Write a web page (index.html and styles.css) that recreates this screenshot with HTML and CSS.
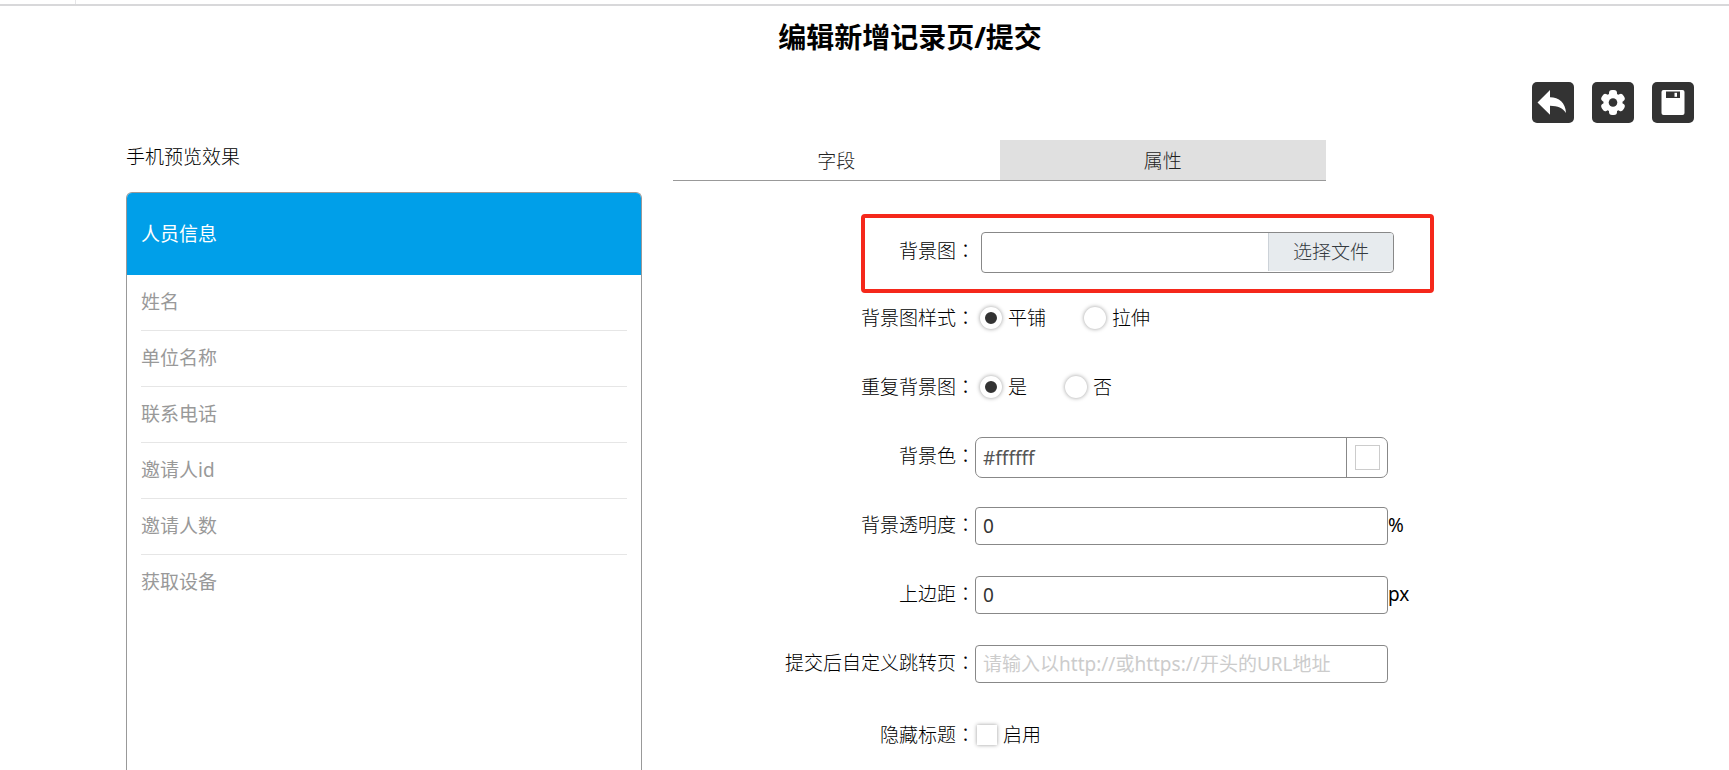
FILE: index.html
```html
<!DOCTYPE html>
<html lang="zh-CN">
<head>
<meta charset="utf-8">
<meta name="viewport" content="width=device-width, initial-scale=1">
<title>编辑新增记录页/提交</title>
<link rel="stylesheet" href="styles.css">
</head>
<body>
<div class="topbar"></div>
<h1 class="title">编辑新增记录页/提交</h1>
<div class="toolbar">
  <button class="tool" type="button" aria-label="返回">
    <svg viewBox="0 0 42 41" width="42" height="41"><path fill="#fff" d="M5.500 20.500 18 8v7.200c9 .3 15.500 5.300 16 15.800-3.300-5.200-8-7.200-16-7.300v9z"/></svg>
  </button>
  <button class="tool" type="button" aria-label="设置">
    <svg viewBox="0 0 42 41" width="42" height="41"><g fill="#fff"><circle cx="21" cy="20.500" r="9.500"/><rect x="17" y="8" width="8" height="25" rx="3"/><rect x="17" y="8" width="8" height="25" rx="3" transform="rotate(60 21 20.500)"/><rect x="17" y="8" width="8" height="25" rx="3" transform="rotate(120 21 20.500)"/></g><circle cx="21" cy="20.500" r="4.300" fill="#333"/></svg>
  </button>
  <button class="tool" type="button" aria-label="保存">
    <svg viewBox="0 0 42 41" width="42" height="41"><rect x="9.500" y="8" width="23" height="25" rx="2" fill="#fff"/><path fill="#333" d="M14 9.500h14V16H14z"/><path fill="#fff" d="M22.500 10.800H25v4h-2.500z"/></svg>
  </button>
</div>
<main class="workspace">
  <section class="preview">
    <h2 class="preview-title">手机预览效果</h2>
    <div class="phone">
      <header class="phone-header">人员信息</header>
      <ul class="fields">
        <li class="field">姓名</li>
        <li class="field">单位名称</li>
        <li class="field">联系电话</li>
        <li class="field">邀请人id</li>
        <li class="field">邀请人数</li>
        <li class="field">获取设备</li>
      </ul>
    </div>
  </section>
  <section class="settings">
    <div class="tabs" role="tablist">
      <button class="tab" type="button" role="tab" aria-selected="false">字段</button>
      <button class="tab tab-active" type="button" role="tab" aria-selected="true">属性</button>
    </div>
    <form class="form">
      <div class="row row-file">
        <label class="label label-input" for="bg-file">背景图<span class="colon" lang="zh-Hant">：</span></label>
        <div class="file">
          <input class="file-name" id="bg-file" type="text" readonly>
          <button class="file-button" type="button">选择文件</button>
        </div>
        <div class="highlight"></div>
      </div>
      <div class="row" role="radiogroup" aria-labelledby="style-label">
        <span class="label" id="style-label">背景图样式<span class="colon" lang="zh-Hant">：</span></span>
        <div class="options">
          <label class="option"><input class="radio" type="radio" name="style" checked>平铺</label>
          <label class="option"><input class="radio" type="radio" name="style">拉伸</label>
        </div>
      </div>
      <div class="row" role="radiogroup" aria-labelledby="repeat-label">
        <span class="label" id="repeat-label">重复背景图<span class="colon" lang="zh-Hant">：</span></span>
        <div class="options">
          <label class="option"><input class="radio" type="radio" name="repeat" checked>是</label>
          <label class="option"><input class="radio" type="radio" name="repeat">否</label>
        </div>
      </div>
      <div class="row row-color">
        <label class="label label-input" for="bg-color">背景色<span class="colon" lang="zh-Hant">：</span></label>
        <div class="color">
          <input class="color-value" id="bg-color" type="text" value="#ffffff">
          <button class="color-button" type="button" aria-label="选择颜色"><span class="swatch"></span></button>
        </div>
      </div>
      <div class="row">
        <label class="label label-input" for="opacity">背景透明度<span class="colon" lang="zh-Hant">：</span></label>
        <input class="input" id="opacity" type="text" value="0">
        <span class="unit">%</span>
      </div>
      <div class="row">
        <label class="label label-input" for="margin-top">上边距<span class="colon" lang="zh-Hant">：</span></label>
        <input class="input" id="margin-top" type="text" value="0">
        <span class="unit">px</span>
      </div>
      <div class="row">
        <label class="label label-input" for="redirect">提交后自定义跳转页<span class="colon" lang="zh-Hant">：</span></label>
        <input class="input" id="redirect" type="text" placeholder="请输入以http://或https://开头的URL地址">
      </div>
      <div class="row row-last">
        <span class="label" id="hide-label">隐藏标题<span class="colon" lang="zh-Hant">：</span></span>
        <label class="check"><input class="checkbox" type="checkbox" aria-describedby="hide-label">启用</label>
      </div>
    </form>
  </section>
</main>
</body>
</html>
```
FILE: styles.css
```css
* {
  box-sizing: border-box;
}

body {
  margin: 0;
  min-height: 100vh;
  display: flex;
  flex-direction: column;
  background: #fff;
  color: #000;
  font: 300 19px/28px "Noto Sans", "Noto Sans CJK SC", sans-serif;
}

button,
input {
  font: inherit;
  margin: 0;
}

button {
  padding: 0;
  border: 0;
  cursor: pointer;
}

.topbar {
  height: 6px;
  padding-left: 75px;
  border-bottom: 2px solid #d8d8da;
}

.topbar::before {
  content: "";
  display: block;
  width: 1px;
  height: 4px;
  background: #e6e6e8;
}

.title {
  margin: 11px 0 0 91px;
  font-size: 28px;
  line-height: 40px;
  font-weight: 700;
  text-align: center;
}

.toolbar {
  display: flex;
  justify-content: flex-end;
  gap: 18px;
  margin-top: 25px;
  padding-right: 35px;
}

.tool {
  display: flex;
  width: 42px;
  height: 41px;
  border-radius: 5px;
  background: #333;
}

.workspace {
  flex: 1;
  display: grid;
  grid-template-columns: 516fr 761fr;
  gap: 31px;
  padding: 17px 17.06% 0 7.29%;
}

.preview {
  display: flex;
  flex-direction: column;
}

.preview-title {
  margin: 3px 0 21px;
  font-size: 19px;
  line-height: 28px;
  font-weight: 300;
}

.phone {
  flex: 1;
  border: 1px solid #999;
  border-bottom: 0;
  border-radius: 6px 6px 0 0;
}

.phone-header {
  padding: 27px 14px;
  border-radius: 5px 5px 0 0;
  background: #009fe9;
  color: #fff;
  font-weight: 400;
}

.fields {
  list-style: none;
  margin: 0;
  padding: 0 14px;
}

.field {
  padding: 13px 0 14px;
  border-bottom: 1px solid #e6e6e6;
  color: #999;
  font-weight: 400;
}

.field:last-child {
  border-bottom: 0;
}

.tabs {
  display: flex;
  width: 85.8%;
  border-bottom: 1px solid #999;
}

.tab {
  flex: 1;
  height: 40px;
  padding-top: 2px;
  background: none;
  color: #222;
}

.tab-active {
  background: #e0e0e0;
}

.form {
  padding-top: 51px;
}

.row {
  position: relative;
  display: grid;
  grid-template-columns: 302px minmax(0, 413px) auto;
  align-items: center;
  min-height: 38px;
  margin-bottom: 31px;
}

.row-file {
  margin-bottom: 26px;
}

.row-color {
  margin-bottom: 29px;
}

.row-last {
  min-height: 42px;
  margin-bottom: 0;
}

.label {
  text-align: right;
  white-space: nowrap;
}

.label-input,
.unit {
  padding-bottom: 3px;
}

.unit {
  font-weight: 400;
}

.colon {
  font-family: "Noto Sans CJK TC", sans-serif;
  line-height: 0;
}

.highlight {
  position: absolute;
  top: -18px;
  bottom: -20px;
  left: 188px;
  width: 573px;
  border: 4px solid #f5281b;
  border-radius: 4px;
  pointer-events: none;
}

.file {
  display: flex;
  height: 41px;
  margin: 0 -6px 0 6px;
  padding-bottom: 1px;
  border: 1px solid #888;
  border-radius: 4px;
}

.file-name {
  flex: 1;
  min-width: 0;
  border: 0;
  background: none;
}

.file-button {
  width: 125px;
  border-left: 1px solid #ccd2d8;
  border-radius: 0 3px 3px 0;
  background: #e7ebee;
  color: #343a40;
}

.options {
  display: flex;
  gap: 38px;
  padding-left: 5px;
}

.option,
.check {
  display: flex;
  align-items: center;
  gap: 6px;
}

.radio,
.checkbox {
  appearance: none;
  width: 22px;
  height: 22px;
  background: #fff;
  box-shadow: 0 0 4px rgba(0, 0, 0, 0.4);
}

.radio {
  border-radius: 50%;
}

.radio:checked {
  border: 5px solid #fff;
  background: #333;
}

.checkbox {
  width: 20px;
  height: 20px;
}

.check {
  padding-left: 2px;
}

.color {
  display: flex;
  height: 41px;
  border: 1px solid #888;
  border-radius: 7px;
}

.color-value {
  flex: 1;
  min-width: 0;
  padding: 0 7px;
  border: 0;
  background: none;
  color: #555;
  font-weight: 400;
}

.color-button {
  display: grid;
  place-items: center;
  width: 41px;
  border-left: 1px solid #888;
  background: none;
}

.swatch {
  width: 25px;
  height: 25px;
  border: 1px solid #ccc;
  background: #fff;
}

.input {
  width: 100%;
  height: 38px;
  padding: 0 7px;
  border: 1px solid #888;
  border-radius: 4px;
  background: #fff;
  color: #333;
  font-weight: 400;
}

.input::placeholder {
  color: #ccc;
  opacity: 1;
}
```
